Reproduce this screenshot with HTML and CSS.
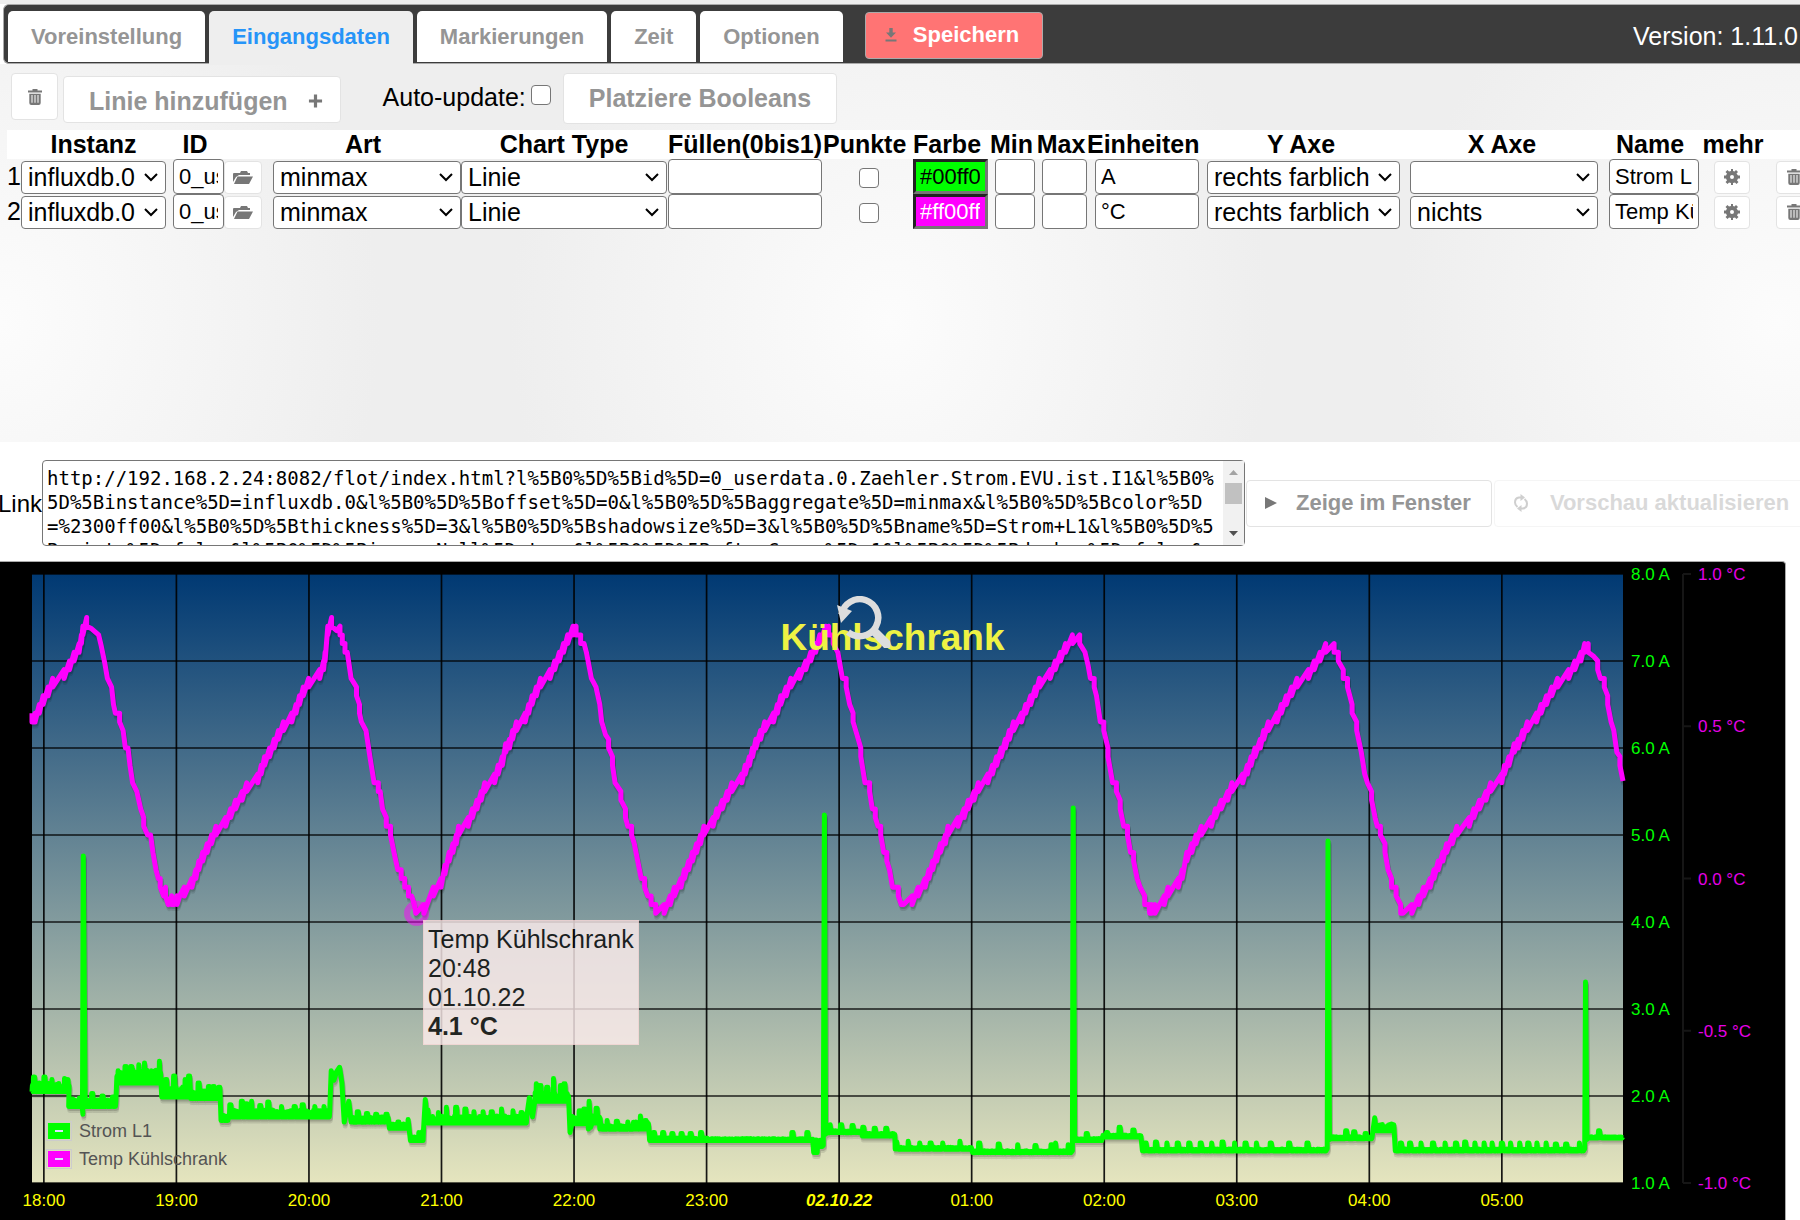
FILE: index.html
```html
<!DOCTYPE html>
<html lang="de">
<head>
  <meta charset="UTF-8" />
  <meta name="viewport" content="width=device-width, initial-scale=1.0"/>
  <title>Flot</title>
  <link rel="stylesheet" href="styles.css">
</head>
<body>

  <!-- Icons -->
  <svg class="icon-defs" xmlns="http://www.w3.org/2000/svg">
    <symbol id="i-trash" viewBox="0 0 16 16">
      <path fill-rule="evenodd" d="M5.500 0h5v1.600H15v2H1v-2h4.500zM2.300 4.800h11.400V14q0 2-2 2H4.300q-2 0-2-2zM4.500 6v7.800h1V6zm3 0v7.800h1V6zm3 0v7.800h1V6z"/>
    </symbol>
    <symbol id="i-plus" viewBox="0 0 16 16">
      <path d="M6.300 1h3.400v5.300H15v3.400H9.700V15H6.300V9.700H1V6.300h5.300z"/>
    </symbol>
    <symbol id="i-folder" viewBox="0 0 20 16">
      <path d="M0 13V5q0-1 1-1h6l1-2h6l1 2h2v2H6L3 8z"/>
      <path d="M4.500 7.500H20l-4 7.500H1z"/>
    </symbol>
    <symbol id="i-gear" viewBox="0 0 16 16">
      <path fill-rule="evenodd" d="M7 0h2v2l1.500.5L12 1l2 2-1.500 1.500L14 6.500h2v3h-2l-1 2 1.500 1.500L12.500 15 11 13.500l-2 .5v2H7v-2l-2-.5L3.500 15l-2-2L3 11.500l-1-2H0v-3h2l1-2L1.500 3l2-2L5 2.500 7 2zm1 6a2 2 0 1 0 0 4 2 2 0 0 0 0-4z"/>
    </symbol>
    <symbol id="i-save" viewBox="0 0 12 14">
      <path d="M4.300 0h3.400v4.500H11L6 9.700 1 4.500h3.300zM.5 11.500h11v2H.5z"/>
    </symbol>
    <symbol id="i-play" viewBox="0 0 14 14">
      <path d="M1 1l12 6-12 6z"/>
    </symbol>
    <symbol id="i-refresh" viewBox="0 0 18 18">
      <path fill="none" stroke="currentColor" stroke-width="2" d="M10 3.500H7Q3 4 3 8.500q0 2.500 2.500 4.500M8 14.500h3q4-.5 4-5Q15 7 12.500 5"/>
      <path d="M8.500 0v7L13 3.500zM9.500 11v7L5 14.500z"/>
    </symbol>
  </svg>

  <!-- Tabs -->
  <div class="tab-bar">
    <button class="tab">Voreinstellung</button>
    <button class="tab active">Eingangsdaten</button>
    <button class="tab">Markierungen</button>
    <button class="tab">Zeit</button>
    <button class="tab">Optionen</button>
    <button class="save-btn"><svg class="icon icon-save"><use href="#i-save"/></svg>Speichern</button>
    <div class="version">Version: 1.11.0</div>
  </div>

  <!-- Input data -->
  <div class="panel">
    <div class="toolbar">
      <button class="btn icon-btn" title="Löschen"><svg class="icon"><use href="#i-trash"/></svg></button>
      <button class="btn add-btn">Linie hinzufügen<svg class="icon"><use href="#i-plus"/></svg></button>
      <div class="auto-update">
        <label for="autoUpdate">Auto-update:</label>
        <input type="checkbox" id="autoUpdate" />
      </div>
      <button class="btn place-btn">Platziere Booleans</button>
    </div>

    <table class="lines">
      <colgroup>
        <col class="c-num"><col class="c-inst"><col class="c-id"><col class="c-open"><col class="c-art">
        <col class="c-type"><col class="c-fill"><col class="c-points"><col class="c-color"><col class="c-min">
        <col class="c-max"><col class="c-unit"><col class="c-yaxis"><col class="c-xaxis"><col class="c-name">
        <col class="c-more"><col class="c-del">
      </colgroup>
      <thead>
        <tr>
          <th></th><th>Instanz</th><th>ID</th><th></th><th class="h-art">Art</th><th>Chart Type</th>
          <th>Füllen(0bis1)</th><th>Punkte</th><th>Farbe</th><th>Min</th><th>Max</th><th>Einheiten</th>
          <th>Y Axe</th><th>X Axe</th><th>Name</th><th>mehr</th><th></th>
        </tr>
      </thead>
      <tbody>
        <tr>
          <td>1</td>
          <td><select aria-label="Instanz 1"><option>influxdb.0</option></select></td>
          <td class="pad-s"><input type="text" aria-label="ID 1" value="0_userdata.0.Zaehler.Strom.EVU.ist.I1" /></td>
          <td><button class="btn row-btn open-btn" title="ID wählen"><svg class="icon icon-folder"><use href="#i-folder"/></svg></button></td>
          <td class="pad-m"><select aria-label="Art 1"><option>minmax</option></select></td>
          <td><select aria-label="Chart Type 1"><option>Linie</option></select></td>
          <td class="fill"><input type="text" aria-label="Füllen 1" /></td>
          <td class="points"><input type="checkbox" aria-label="Punkte 1" /></td>
          <td class="pad-s"><input type="text" class="color green" aria-label="Farbe 1" value="#00ff00" /></td>
          <td class="pad-s"><input type="text" aria-label="Min 1" /></td>
          <td class="pad-s"><input type="text" aria-label="Max 1" /></td>
          <td class="pad-m"><input type="text" aria-label="Einheiten 1" value="A" /></td>
          <td class="pad-m"><select class="w-y" aria-label="Y Axe 1"><option>rechts farblich</option></select></td>
          <td class="pad-s"><select class="w-x" aria-label="X Axe 1"><option></option></select></td>
          <td class="pad-m"><input type="text" aria-label="Name 1" value="Strom L1" /></td>
          <td class="more"><button class="btn row-btn" title="mehr"><svg class="icon"><use href="#i-gear"/></svg></button></td>
          <td class="del"><button class="btn row-btn" title="Löschen"><svg class="icon"><use href="#i-trash"/></svg></button></td>
        </tr>
        <tr>
          <td>2</td>
          <td><select aria-label="Instanz 2"><option>influxdb.0</option></select></td>
          <td class="pad-s"><input type="text" aria-label="ID 2" value="0_userdata.0.Temp.Kuehlschrank" /></td>
          <td><button class="btn row-btn open-btn" title="ID wählen"><svg class="icon icon-folder"><use href="#i-folder"/></svg></button></td>
          <td class="pad-m"><select aria-label="Art 2"><option>minmax</option></select></td>
          <td><select aria-label="Chart Type 2"><option>Linie</option></select></td>
          <td class="fill"><input type="text" aria-label="Füllen 2" /></td>
          <td class="points"><input type="checkbox" aria-label="Punkte 2" /></td>
          <td class="pad-s"><input type="text" class="color magenta" aria-label="Farbe 2" value="#ff00ff" /></td>
          <td class="pad-s"><input type="text" aria-label="Min 2" /></td>
          <td class="pad-s"><input type="text" aria-label="Max 2" /></td>
          <td class="pad-m"><input type="text" aria-label="Einheiten 2" value="°C" /></td>
          <td class="pad-m"><select class="w-y" aria-label="Y Axe 2"><option>rechts farblich</option></select></td>
          <td class="pad-s"><select class="w-x" aria-label="X Axe 2"><option>nichts</option></select></td>
          <td class="pad-m"><input type="text" aria-label="Name 2" value="Temp Kühlschrank" /></td>
          <td class="more"><button class="btn row-btn" title="mehr"><svg class="icon"><use href="#i-gear"/></svg></button></td>
          <td class="del"><button class="btn row-btn" title="Löschen"><svg class="icon"><use href="#i-trash"/></svg></button></td>
        </tr>
      </tbody>
    </table>
  </div>

  <!-- Link -->
  <div class="link-row">
    <label for="link">Link</label>
    <div class="link-box">
      <textarea id="link">http://192.168.2.24:8082/flot/index.html?l%5B0%5D%5Bid%5D=0_userdata.0.Zaehler.Strom.EVU.ist.I1&amp;l%5B0%5D%5Binstance%5D=influxdb.0&amp;l%5B0%5D%5Boffset%5D=0&amp;l%5B0%5D%5Baggregate%5D=minmax&amp;l%5B0%5D%5Bcolor%5D
=%2300ff00&amp;l%5B0%5D%5Bthickness%5D=3&amp;l%5B0%5D%5Bshadowsize%5D=3&amp;l%5B0%5D%5Bname%5D=Strom+L1&amp;l%5B0%5D%5Bpoints%5D=false&amp;l%5B0%5D%5BignoreNull%5D=true&amp;l%5B0%5D%5BafterComma%5D=1&amp;l%5B0%5D%5Bdashes%5D=false&amp;l%5B0%5D%5BdashLength%5D=10&amp;l%5B0%5D%5BspaceLength%5D=10</textarea>
      <div class="scrollbar">
        <svg viewBox="0 0 9 5"><path fill="#a3a3a3" d="M0 5h9L4.500 0z"/></svg>
        <div class="thumb"></div>
        <svg viewBox="0 0 9 5"><path fill="#505050" d="M0 0h9L4.500 5z"/></svg>
      </div>
    </div>
    <button class="btn window-btn"><svg class="icon icon-play"><use href="#i-play"/></svg>Zeige im Fenster</button>
    <button class="btn window-btn" disabled><svg class="icon icon-refresh"><use href="#i-refresh"/></svg>Vorschau aktualisieren</button>
  </div>

  <!-- Chart -->
  <div class="chart">
    <svg id="plot" class="plot" xmlns="http://www.w3.org/2000/svg"></svg>
    <div class="chart-title">Kühlschrank</div>
    <svg class="zoom-out" viewBox="0 0 54 52">
      <path fill="none" stroke="#ddd" stroke-width="6.500" d="M4.500 18.500A18.500 18.500 0 1 1 11 36"/>
      <path fill="#ddd" d="M0 9L15 15 4 27zM32 36l6-6 15 15q2 9-5 8z"/>
    </svg>
    <div class="legend">
      <div class="legend-item"><span class="swatch green"></span>Strom L1</div>
      <div class="legend-item"><span class="swatch magenta"></span>Temp Kühlschrank</div>
    </div>
    <div class="tooltip">Temp Kühlschrank<br>20:48<br>01.10.22<br><b>4.1 °C</b></div>
  </div>

  <script src="chart.js"></script>
</body>
</html>
```
FILE: styles.css
```css
* {
  box-sizing: border-box;
}

body {
  margin: 0;
  padding-top: 4px;
  background: linear-gradient(#eee 4px, #fff 4px);
  font-family: Arial, "Liberation Sans", sans-serif;
  font-size: 25px;
  line-height: 29px;
  color: #000;
  overflow: hidden;
}

button, input, select {
  font-family: inherit;
  margin: 0;
}

.icon-defs {
  display: none;
}

.icon {
  width: 16px;
  height: 16px;
  fill: currentColor;
  color: #777;
  flex: none;
}

/* tabs */
.tab-bar {
  display: flex;
  align-items: flex-end;
  gap: 4px;
  height: 60px;
  margin-left: 3px;
  padding: 0 2px 0 4px;
  background: #3c3c3c;
  border: 1px solid #aaa;
  border-right: none;
  border-radius: 6px 0 0 6px;
}

.tab {
  height: 52px;
  padding: 0 23px;
  border: none;
  border-bottom: 1px solid #3c3c3c;
  border-radius: 5px 5px 0 0;
  background: #fff;
  color: #959595;
  font-size: 22px;
  font-weight: bold;
}

.tab.active {
  height: 54px;
  margin-bottom: -2px;
  padding-bottom: 2px;
  border: none;
  background: #eee;
  color: #2694f8;
}

.save-btn {
  display: flex;
  align-items: center;
  gap: 16px;
  height: 47px;
  margin: 0 0 4px 18px;
  padding: 0 23px 2px 19px;
  border: 1px solid #aaa;
  border-radius: 4px;
  background: #ff7474;
  color: #fff;
  font-size: 22px;
  font-weight: bold;
}

.icon-save {
  width: 12px;
  height: 14px;
}

.version {
  align-self: center;
  margin-left: auto;
  padding-top: 4px;
  color: #fff;
}

/* input data */
.panel {
  height: 378px;
  background: radial-gradient(ellipse 380px 420px at center 258px, #fcfcfc, #eee) -445px 0 / 890px 100%;
  overflow: hidden;
}

.toolbar {
  display: flex;
  align-items: flex-start;
  height: 66px;
  padding: 9px 0 0 11px;
}

.btn {
  display: flex;
  align-items: center;
  justify-content: center;
  padding: 0;
  border: 1px solid #e3e3e3;
  border-radius: 4px;
  background: #fff;
  color: #959595;
  font-size: 25px;
  font-weight: bold;
}

.icon-btn {
  width: 47px;
  height: 47px;
}

.add-btn {
  gap: 20px;
  height: 47px;
  margin: 3px 42px 0 5px;
  padding: 3px 17px 0 25px;
}

.add-btn .icon {
  width: 15px;
}

.auto-update {
  display: flex;
  gap: 5px;
  margin-top: 10px;
}

.place-btn {
  height: 51px;
  margin-left: 12px;
  padding: 0 25px;
}

input[type="checkbox"] {
  display: block;
  appearance: none;
  width: 20px;
  height: 20px;
  margin-top: 2px;
  border: 1px solid #767676;
  border-radius: 4px;
  background: #fff;
}

.lines {
  width: 1815px;
  min-width: 100%;
  margin-left: 7px;
  table-layout: fixed;
  border-collapse: collapse;
}

.c-num { width: 14px; }
.c-inst { width: 145px; }
.c-id { width: 58px; }
.c-open { width: 41px; }
.c-art { width: 196px; }
.c-type { width: 206px; }
.c-fill { width: 156px; }
.c-points { width: 83px; }
.c-color { width: 82px; }
.c-min { width: 47px; }
.c-max { width: 52px; }
.c-unit { width: 112px; }
.c-yaxis { width: 204px; }
.c-xaxis { width: 198px; }
.c-name { width: 98px; }
.c-more { width: 68px; }
.c-del { width: 55px; }

.lines th {
  height: 29px;
  padding: 0;
  background: #fff;
  white-space: nowrap;
}

.lines td {
  height: 35px;
  padding: 0;
}

.lines input[type="text"] {
  display: block;
  width: 100%;
  height: 35px;
  padding: 0 5px;
  border: 1px solid #767676;
  border-radius: 4px;
  background: #fff;
  color: #000;
  font-size: 22px;
}

.lines select,
.lines .row-btn {
  display: flex;
  height: 33px;
  margin-top: 1px;
}

.lines select {
  appearance: none;
  width: 100%;
  padding: 0 0 0 6px;
  border: 1px solid #767676;
  border-radius: 4px;
  background: #fff url('data:image/svg+xml,<svg xmlns="http://www.w3.org/2000/svg" width="14" height="9"><path d="M1 1l6 6 6-6" fill="none" stroke="black" stroke-width="2"/></svg>') no-repeat right 7px center;
  color: #000;
  font-size: 25px;
}

.lines .pad-s { padding-left: 7px; }
.lines .pad-m { padding-left: 8px; }
.lines .fill { padding: 0 1px; }
.lines .points { padding-left: 36px; }
.lines .more { padding-left: 15px; }
.lines .del { padding-left: 9px; }
.lines .w-y { width: 193px; }
.lines .w-x { width: 188px; }

.lines input.color {
  padding: 0 5px 0 4px;
  border: 3px solid #767676;
  border-top-color: #222;
  border-left-color: #222;
  border-radius: 0;
}

.lines input.green { background: #00ff00; }
.lines input.magenta { background: #ff00ff; color: #fff; }

.row-btn {
  width: 36px;
}

.open-btn {
  width: 38px;
}

.icon-folder {
  width: 20px;
}

/* link */
.link-row {
  display: flex;
  align-items: center;
  padding: 18px 0 15px;
}

.link-row label {
  margin-left: -2px;
  font-size: 24px;
}

.link-box {
  flex: none;
  position: relative;
  width: calc(67% - 3px);
  height: 86px;
}

textarea {
  display: block;
  width: 100%;
  height: 100%;
  margin: 0;
  padding: 5px 25px 5px 4px;
  border: 1px solid #767676;
  border-radius: 4px;
  color: #000;
  font: 19px/24px "DejaVu Sans Mono", monospace;
  word-break: break-all;
  resize: none;
  overflow: hidden;
}

.scrollbar {
  position: absolute;
  top: 1px;
  right: 1px;
  bottom: 1px;
  display: flex;
  flex-direction: column;
  align-items: center;
  justify-content: space-between;
  width: 21px;
  padding: 9px 0;
  background: #f1f1f1;
}

.scrollbar svg {
  width: 9px;
  height: 5px;
}

.thumb {
  width: 17px;
  height: 21px;
  margin-bottom: 20px;
  background: #c1c1c1;
}

.window-btn {
  flex: none;
  gap: 18px;
  height: 47px;
  margin-left: 1px;
  padding: 0 20px 0 17px;
  font-size: 22px;
}

.window-btn:disabled {
  gap: 20px;
  margin-left: 2px;
  opacity: 0.35;
}

.icon-play {
  width: 14px;
  height: 14px;
}

.icon-refresh {
  width: 18px;
  height: 18px;
}

/* chart */
.chart {
  position: relative;
  height: 660px;
  margin-right: 14px;
  background: #000;
  border: 1px solid #aaa;
  border-width: 1px 1px 0 0;
  border-radius: 0 4px 0 0;
}

.plot {
  display: block;
  width: 100%;
  height: 100%;
}

.plot text {
  font-size: 17px;
}

.chart-title {
  position: absolute;
  top: 55px;
  left: 0;
  width: 100%;
  text-align: center;
  color: #eef244;
  font-size: 37px;
  font-weight: bold;
  line-height: 42px;
}

.zoom-out {
  position: absolute;
  top: 34px;
  left: 47%;
  width: 54px;
  height: 52px;
  margin-left: -2px;
}

.legend {
  position: absolute;
  left: 46px;
  bottom: 48px;
  color: #545454;
  font-size: 18px;
}

.legend-item {
  display: flex;
  align-items: center;
  gap: 7px;
  height: 28px;
}

.swatch {
  width: 26px;
  height: 20px;
  border: 1px solid #ccc;
  padding: 1px;
  background-clip: content-box;
}

.swatch::before {
  content: "";
  display: block;
  width: 8px;
  height: 2px;
  margin: 7px;
  background: #ddf;
}

.swatch.green { background-color: #00ff00; }
.swatch.magenta { background-color: #ff00ff; }

.tooltip {
  position: absolute;
  top: 358px;
  left: 423px;
  padding: 4px 4px 3px;
  border: 1px solid #fdd;
  background: #fee;
  opacity: 0.8;
}
```
FILE: chart.js
```js
// one hour is 346.4 samples, the plot starts shortly before 18:00
const HOUR = 346.4;
const T_FIRST = 84;
const T_LAST = 4242;
const T_18 = 115;

const hours = ["18:00", "19:00", "20:00", "21:00", "22:00", "23:00", "02.10.22", "01:00", "02:00", "03:00", "04:00", "05:00"];

// [sample, °C], the sensor falls back by 0.1 on the way up
const temp = [
  [84,6.4],[92,6.3],[92,6.4],[103,6.5],[113,6.6],[126,6.7],[138,6.8],[168,6.9],[182,7],[194,7.1],[207,7.2],[213,7.3],[217,7.4],[227,7.5],
  [240,7.37],[258,7.3],[265,7.17],[274,6.98],[281,6.8],[292,6.7],[297,6.5],[302,6.4],[313,6.4],[313,6.3],[322,6.2],[328,6],[335,6],[340,5.8],[347,5.6],[358,5.5],[368,5.3],
  [376,5.2],[376,5.1],[386,5],[394,5],[400,4.8],[408,4.6],[414,4.5],[419,4.5],[419,4.4],[428,4.3],[433,4.4],[440,4.2],[449,4.3],[456,4.2],[463,4.3],[470,4.3],
  [482,4.4],[502,4.5],[512,4.6],[520,4.7],[530,4.8],[542,4.9],[553,5],[565,5.1],[590,5.2],[603,5.3],[616,5.4],[633,5.5],[645,5.6],[674,5.7],[683,5.8],[692,5.9],[705,6],
  [717,6.1],[728,6.2],[741,6.3],[763,6.4],[774,6.5],[783,6.6],[793,6.7],[807,6.8],[836,6.9],[846,7],[850,7.1],[857,7.4],[867,7.5],
  [880,7.35],[889,7.4],[895,7.3],[895,7.2],[902,7.2],[902,7.1],[908,7.1],[918,6.8],[932,6.7],[932,6.6],[940,6.5],[940,6.4],[945,6.3],[957,6.2],[967,5.9],[978,5.6],[989,5.6],
  [989,5.5],[994,5.5],[1000,5.3],[1010,5.2],[1010,5.1],[1021,5.1],[1021,5],[1030,4.8],[1040,4.6],[1049,4.6],[1049,4.5],[1058,4.5],[1058,4.4],[1068,4.4],[1068,4.3],[1076,4.3],
  [1083,4.2],[1087,4.1],[1108,4.2],[1133,4.4],[1153,4.5],[1163,4.65],[1174,4.8],[1184,4.9],[1193,5],[1199,5.1],[1224,5.2],[1235,5.3],[1247,5.4],[1258,5.5],[1267,5.6],
  [1293,5.7],[1302,5.8],[1313,5.9],[1322,6.05],[1332,6.1],[1340,6.2],[1350,6.3],[1373,6.4],[1382,6.5],[1391,6.6],[1402,6.7],[1413,6.8],[1438,6.9],[1450,7],[1462,7.1],
  [1473,7.2],[1484,7.3],[1498,7.4],[1506,7.4],[1506,7.3],[1518,7.3],[1518,7.2],[1527,7.2],[1533,7.1],[1546,6.8],[1558,6.7],[1568,6.5],
  [1573,6.3],[1583,6.15],[1591,6.1],[1591,6],[1601,5.9],[1601,5.8],[1608,5.6],[1623,5.5],[1623,5.4],[1635,5.3],[1635,5.2],[1641,5.1],[1651,5.1],[1651,5],[1658,4.9],
  [1667,4.7],[1676,4.5],[1685,4.5],[1685,4.4],[1693,4.3],[1702,4.3],[1702,4.2],[1714,4.2],[1714,4.1],[1736,4.2],[1752,4.3],[1763,4.4],[1780,4.5],[1789,4.6],[1800,4.7],
  [1810,4.8],[1821,4.9],[1831,5],[1840,5.1],[1864,5.2],[1874,5.3],[1888,5.4],[1901,5.5],[1913,5.6],[1939,5.7],[1948,5.8],[1959,5.9],[1967,6],[1976,6.1],[1988,6.2],[1999,6.3],
  [2022,6.4],[2032,6.5],[2041,6.6],[2055,6.7],[2067,6.8],[2090,6.9],[2106,7],[2119,7.1],[2132,7.2],[2143,7.3],[2158,7.4],[2166,7.4],[2166,7.3],[2178,7.3],[2178,7.2],[2190,7.1],
  [2202,6.8],[2212,6.8],[2212,6.7],[2221,6.5],[2230,6.4],[2230,6.3],[2240,6.15],[2250,6],[2250,5.9],[2261,5.6],[2273,5.6],[2273,5.5],[2280,5.3],[2288,5.3],[2288,5.2],[2295,5.1],
  [2302,5.1],[2302,5],[2310,4.8],[2318,4.8],[2318,4.7],[2325,4.6],[2333,4.4],[2348,4.4],[2348,4.3],[2356,4.2],[2362,4.2],[2384,4.3],[2400,4.4],[2418,4.5],[2428,4.6],[2438,4.7],
  [2448,4.8],[2458,4.9],[2471,5],[2478,5.1],[2504,5.2],[2520,5.3],[2531,5.4],[2546,5.5],[2557,5.6],[2582,5.7],[2594,5.8],[2605,5.9],[2617,6],[2628,6.1],[2638,6.2],[2649,6.3],
  [2670,6.4],[2681,6.5],[2694,6.6],[2706,6.7],[2717,6.8],[2745,6.9],[2758,7],[2772,7.1],[2785,7.2],[2803,7.3],[2822,7.3],[2822,7.2],[2836,7.1],[2844,6.95],[2850,6.8],[2860,6.8],
  [2860,6.7],[2866,6.6],[2876,6.3],[2885,6.3],[2885,6.2],[2896,6],[2896,5.9],[2908,5.6],[2918,5.6],[2918,5.5],[2928,5.4],[2928,5.3],[2937,5.1],[2947,5.1],[2947,5],[2955,4.8],
  [2963,4.8],[2963,4.7],[2972,4.5],[2980,4.4],[2992,4.3],[2992,4.2],[3003,4.2],[3005,4.1],[3010,4.2],[3019,4.2],[3019,4.1],[3043,4.3],[3053,4.4],[3080,4.5],[3090,4.6],[3102,4.8],[3115,4.9],
  [3126,5],[3140,5.1],[3166,5.2],[3177,5.3],[3192,5.4],[3209,5.5],[3220,5.6],[3248,5.7],[3260,5.8],[3270,5.9],[3280,6],[3294,6.1],[3303,6.2],[3315,6.3],[3338,6.4],[3349,6.5],
  [3362,6.6],[3376,6.7],[3390,6.8],[3420,6.9],[3435,7],[3450,7.1],[3465,7.2],[3487,7.2],[3487,7.1],[3498,7.1],[3498,7],[3511,6.9],[3511,6.8],[3522,6.8],[3522,6.7],[3534,6.5],[3534,6.4],
  [3546,6.3],[3546,6.2],[3558,5.95],[3567,5.7],[3574,5.6],[3585,5.5],[3585,5.4],[3594,5.2],[3600,5.1],[3608,5.1],[3608,5],[3620,4.9],[3620,4.8],[3628,4.6],[3637,4.5],[3637,4.4],
  [3649,4.4],[3649,4.3],[3661,4.2],[3661,4.1],[3667,4.1],[3690,4.2],[3708,4.3],[3721,4.4],[3738,4.5],[3748,4.6],[3759,4.7],[3771,4.8],[3781,4.9],[3796,5],[3808,5.1],[3840,5.2],
  [3852,5.3],[3867,5.4],[3884,5.5],[3896,5.6],[3925,5.7],[3932,5.8],[3944,5.9],[3958,6.05],[3968,6.1],[3980,6.2],[3992,6.3],[4016,6.4],[4028,6.5],[4042,6.6],[4056,6.7],[4071,6.8],
  [4100,6.9],[4116,7],[4132,7.1],[4142,7.2],[4151,7.2],[4151,7.1],[4166,7.05],[4176,7],[4176,6.9],[4183,6.8],[4193,6.8],[4193,6.7],[4202,6.6],[4202,6.5],[4211,6.3],[4218,6.2],
  [4226,5.95],[4234,5.9],[4234,5.8],[4242,5.62]
];

// [from, to, low, high, peaks] for the current, a single [sample, A] is a point
const current = [
  [84,180,2.05,2.15,[[88,2.22],[115,2.22],[135,2.19],[168,2.2],[176,2.19]]],
  [180,213,1.88,1.98,[]],[217,1.79],[216,1.95],[218,4.76],[223,1.9],
  [224,303,1.88,1.96,[[241,2.03],[267,2],[295,1.99]]],
  [305,420,2.15,2.3,[[328,2.34],[342,2.34],[362,2.36],[377,2.38],[416,2.4]]],
  [423,497,1.99,2.12,[[434,2.19],[455,2.23],[484,2.19],[494,2.23]]],
  [499,575,1.97,2.07,[[518,2.15],[545,2.11],[557,2.11],[573,2.1]]],
  [578,598,1.72,1.78,[]],
  [600,862,1.76,1.84,[[602,1.9],[631,1.94],[643,1.91],[657,1.94],[680,1.89],[701,1.93],[735,1.88],[770,1.88],[790,1.9],[822,1.88],[846,1.88]]],
  [866,2.29],[873,2.18],[880,2.28],[888,2.33],[894,2.15],[900,1.7],[912,1.94],
  [918,1015,1.7,1.76,[[935,1.82],[958,1.8],[982,1.79],[1010,1.79]]],
  [1018,1066,1.63,1.68,[[1040,1.7],[1068,1.73]]],
  [1073,1108,1.49,1.54,[[1094,1.58],[1104,1.59]]],
  [1112,1.96],[1116,1.75],
  [1118,1378,1.69,1.77,[[1118,1.84],[1145,1.81],[1166,1.87],[1192,1.87],[1216,1.85],[1238,1.82],[1262,1.82],[1285,1.82],[1310,1.85],[1340,1.83],[1362,1.81]]],
  [1384,1.98],[1392,1.76],
  [1398,1486,1.94,2.04,[[1401,2.14],[1412,2.12],[1430,2.1],[1446,2.2],[1466,2.12],[1475,2.14]]],
  [1490,1.58],
  [1495,1530,1.68,1.78,[[1514,1.83],[1526,1.85]]],
  [1534,1.82],[1538,1.62],[1540,1.94],[1544,1.64],
  [1548,1566,1.69,1.78,[[1558,1.86]]],
  [1568,1653,1.62,1.66,[[1568,1.74],[1586,1.72],[1612,1.71],[1640,1.7]]],
  [1655,1695,1.62,1.7,[[1673,1.77],[1686,1.72]]],
  [1698,1848,1.49,1.52,[[1708,1.58],[1733,1.58],[1756,1.57],[1780,1.57],[1805,1.57],[1832,1.58]]],
  [1850,2124,1.49,1.51,[[2071,1.58],[2109,1.58]]],
  [2127,2136,1.35,1.5,[]],[2140,2151,1.42,1.5,[]],
  [2152,1.43],[2155,5.23],[2158,1.56],
  [2160,2250,1.58,1.6,[[2169,1.67],[2198,1.67],[2228,1.66]]],
  [2254,2338,1.54,1.57,[[2256,1.64],[2285,1.63],[2315,1.63]]],
  [2340,2540,1.39,1.41,[[2342,1.47],[2373,1.48],[2403,1.46],[2431,1.46],[2463,1.46],[2508,1.48]]],
  [2542,2800,1.35,1.37,[[2558,1.46],[2609,1.45],[2659,1.44],[2706,1.43],[2748,1.44],[2758,1.46],[2791,1.44]]],
  [2803,1.37],[2805,5.31],[2809,1.5],
  [2811,2880,1.49,1.51,[[2839,1.57]]],
  [2882,2983,1.53,1.55,[[2892,1.58],[2926,1.64],[2962,1.61]]],
  [2986,3467,1.37,1.39,[[2993,1.46],[3020,1.47],[3049,1.46],[3078,1.46],[3108,1.46],[3138,1.46],[3166,1.46],[3195,1.47],[3226,1.46],[3254,1.46],[3283,1.46],[3321,1.46],[3368,1.46],[3417,1.46]]],
  [3469,1.39],[3471,4.93],[3475,1.5],
  [3480,3586,1.51,1.53,[[3517,1.6],[3539,1.59],[3568,1.57]]],
  [3593,1.75],
  [3597,3644,1.6,1.68,[]],
  [3647,4140,1.37,1.39,[[3661,1.46],[3684,1.46],[3713,1.46],[3744,1.46],[3776,1.46],[3804,1.46],[3829,1.47],[3854,1.46],[3878,1.46],[3899,1.46],[3924,1.46],[3947,1.46],[3971,1.46],[3994,1.46],[4016,1.46],[4040,1.46],[4066,1.45],[4092,1.45],[4127,1.46]]],
  [4142,1.39],[4144,3.31],[4148,1.5],
  [4150,4242,1.52,1.53,[[4178,1.6]]]
];

function tempPoints() {
  const out = [];
  let last = 0;
  temp.forEach(([t, v]) => {
    out.push([t, v]);
    if (v > last) out.push([t, v - 0.1]);
    last = v;
  });
  return out;
}

function currentPoints() {
  const out = [];
  let noise = 7;
  current.forEach(seg => {
    if (seg.length === 2) {
      out.push(seg);
      return;
    }
    const [from, to, low, high, peaks] = seg;
    for (let t = from; t <= to; t += 3) {
      const peak = peaks.find(p => Math.abs(p[0] - t) < 2.6);
      noise = (noise * 73 + 41) % 101;
      out.push([t, low]);
      out.push([t + 1, peak ? peak[1] : low + (high - low) * (0.5 + noise / 200)]);
    }
  });
  return out;
}

function draw() {
  const plot = document.getElementById("plot");
  const left = 32, top = 12, bottom = 621;
  const width = plot.clientWidth, right = width - 162;
  const x = t => left + (t - T_FIRST) / (T_LAST - T_FIRST) * (right - left);
  const y = v => bottom - (v - 1) * (bottom - top) / 7;
  let svg = `<defs><linearGradient id="sky" x1="0" y1="0" x2="0" y2="1">
    <stop offset="0" stop-color="#003973"/><stop offset="1" stop-color="#e5e5be"/></linearGradient></defs>
    <rect x="${left}" y="${top}" width="${right - left}" height="${bottom - top}" fill="url(#sky)"/>`;

  // grid and labels
  hours.forEach((label, i) => {
    const gx = x(T_18 + i * HOUR);
    const day = label.length > 5 ? 'font-weight="bold" font-style="italic"' : "";
    svg += `<path d="M${gx} ${top}V${bottom}" stroke="#000" stroke-opacity="0.9" stroke-width="1.700"/>`;
    svg += `<text x="${gx}" y="644" fill="#ff0" text-anchor="middle" ${day}>${label}</text>`;
  });
  for (let v = 1; v <= 8; v++) {
    svg += `<path d="M${left} ${y(v)}H${right}" stroke="#000" stroke-opacity="0.85" stroke-width="1.700"/>`;
    svg += `<text x="${right + 8}" y="${y(v) + 6}" fill="#0f0">${v}.0 A</text>`;
  }
  svg += `<path d="M${right + 60} ${top}V${bottom}" stroke="#161616" stroke-width="2"/>`;
  for (let i = 0; i <= 4; i++) {
    const ty = top + i * (bottom - top) / 4;
    svg += `<path d="M${right + 60} ${ty}h8" stroke="#161616" stroke-width="2"/>`;
    svg += `<text x="${right + 75}" y="${ty + 6}" fill="#e600e6">${(1 - i / 2).toFixed(1)} °C</text>`;
  }

  // series with their shadows
  [[currentPoints(), "#0f0"], [tempPoints(), "#f0f"]].forEach(([points, color]) => {
    const path = points.map(p => x(p[0]).toFixed(1) + "," + y(p[1]).toFixed(1)).join(" ");
    const line = `fill="none" stroke-linejoin="round" points="${path}"`;
    svg += `<polyline ${line} stroke="#000" stroke-opacity="0.1" stroke-width="5" transform="translate(1 4)"/>`;
    svg += `<polyline ${line} stroke="#000" stroke-opacity="0.15" stroke-width="5" transform="translate(1 2)"/>`;
    svg += `<polyline ${line} stroke="${color}" stroke-width="5"/>`;
  });
  svg += `<circle cx="${x(1089)}" cy="${y(4.1)}" r="9.500" fill="none" stroke="#f0f" stroke-opacity="0.5" stroke-width="6"/>`;
  plot.innerHTML = svg;
}

draw();
window.addEventListener("resize", draw);
```
